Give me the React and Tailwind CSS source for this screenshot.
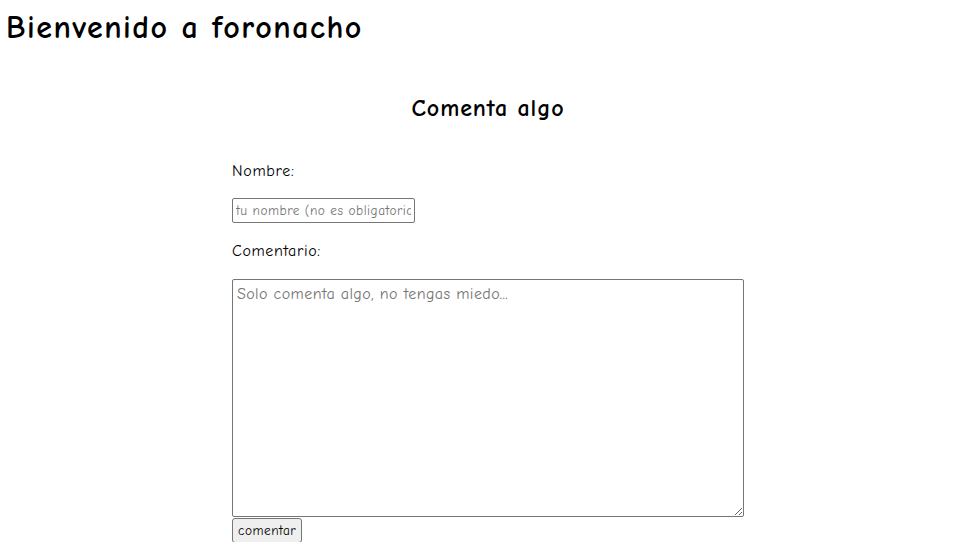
const font = { fontFamily: '"Comic Sans MS", "Comic Neue", "DejaVu Sans", sans-serif' };

export default function App() {
  return (
    <div className="min-h-screen bg-white text-black" style={font}>
      <h1 className="px-[6px] pt-[6px] h-[50px] text-[32px] font-bold leading-[44px] tracking-[1.5px]">
        Bienvenido a foronacho
      </h1>
      <div className="flex flex-col items-center">
        <h2 className="mt-[42px] ml-[6px] h-[33px] text-[24px] font-bold leading-[33px] tracking-[0.9px]">
          Comenta algo
        </h2>
        <form className="w-[512px] ml-[6px] flex flex-col items-start" onSubmit={(e) => e.preventDefault()}>
          <p className="mt-[35px] text-[16px] leading-[22px] tracking-[0.7px]">Nombre:</p>
          <input
            type="text"
            placeholder="tu nombre (no es obligatorio)"
            className="mt-[16px] w-[183px] h-[25px] px-[3px] text-[13.33px] tracking-[0.5px] border border-[#767676] rounded-[2px] placeholder:text-[#757575]"
            style={font}
          />
          <p className="mt-[17px] text-[16px] leading-[22px] tracking-[0.6px]">Comentario:</p>
          <textarea
            placeholder="Solo comenta algo, no tengas miedo..."
            className="mt-[17px] w-[512px] h-[238px] px-[4px] py-[2px] text-[16px] tracking-[0.4px] border border-[#767676] rounded-[2px] placeholder:text-[#757575]"
            style={font}
          />
          <button
            type="submit"
            className="mt-px h-[25px] px-[5px] text-[13.33px] tracking-[0.5px] bg-[#efefef] border border-[#767676] rounded-[3px]"
            style={font}
          >
            comentar
          </button>
        </form>
      </div>
    </div>
  );
}
